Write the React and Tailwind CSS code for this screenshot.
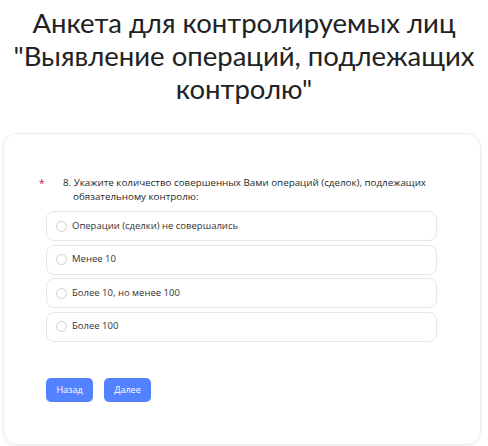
export default function App() {
  const options = [
    'Операции (сделки) не совершались',
    'Менее 10',
    'Более 10, но менее 100',
    'Более 100',
  ];

  return (
    <div className="w-[488px] h-[446px] bg-white overflow-hidden" style={{ fontFamily: '"Open Sans", "Noto Sans", sans-serif' }}>
      {/* заголовок */}
      <h1
        className="pt-[6px] text-center text-[27.5px] leading-[33px] text-[#222] font-normal px-[4px]"
        style={{ fontFamily: 'Lato, "Open Sans", sans-serif' }}
      >
        Анкета для контролируемых лиц "Выявление операций, подлежащих контролю"
      </h1>

      {/* карточка вопроса */}
      <div className="w-[478px] ml-[3px] mt-[28px] h-[312px] rounded-[14px] border border-[#ececec] shadow-[0_1px_3px_rgba(0,0,0,0.06)] pt-[42px] pl-[32px] pr-[43px]">
        <div className="flex">
          <span className="w-[27px] text-[#c4243c] text-[10px] leading-[14px] pl-[3px]">*</span>
          <p className="flex-1 text-[9.8px] leading-[14px] text-[#1f1f1f] pl-[10px] -indent-[10px]">
            8. Укажите количество совершенных Вами операций (сделок), подлежащих обязательному контролю:
          </p>
        </div>

        <div className="ml-[10px] mt-[7px] flex flex-col gap-[3.5px]">
          {options.map((opt) => (
            <label key={opt} className="h-[30px] flex items-center gap-[5px] pl-[9px] rounded-[8px] border border-[#e6e6e6] bg-white">
              <span className="w-[11px] h-[11px] rounded-full border border-[#cfcfcf] bg-white shrink-0" />
              <span className="text-[9.5px] text-[#333]">{opt}</span>
            </label>
          ))}
        </div>

        <div className="ml-[10px] mt-[36px] flex gap-[11px]">
          <button className="w-[47px] h-[24px] rounded-[5px] bg-[#5282ff] text-white text-[9px]">Назад</button>
          <button className="w-[47px] h-[24px] rounded-[5px] bg-[#5282ff] text-white text-[9px]">Далее</button>
        </div>
      </div>
    </div>
  );
}
